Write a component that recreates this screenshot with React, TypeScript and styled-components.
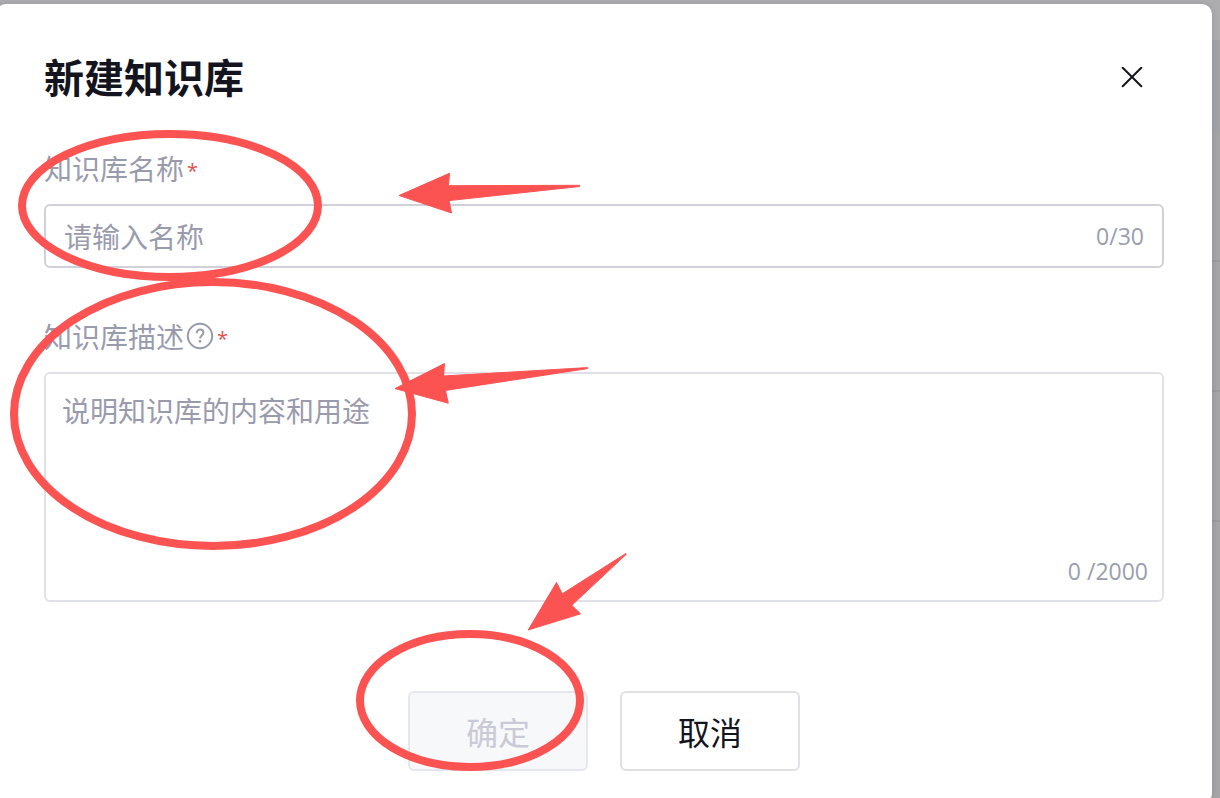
import React, { useState } from "react";
import styled, { createGlobalStyle } from "styled-components";

const GlobalStyle = createGlobalStyle`
  * { box-sizing: border-box; }
  body {
    margin: 0;
    background: #a9a9ac;
    font-family: "Open Sans", "Noto Sans CJK SC", sans-serif;
    color: #14141e;
  }
`;

const Backdrop = styled.div`
  position: relative;
  display: grid;
  grid-template-columns: minmax(0, 1fr) 8px;
  height: 100vh;
  overflow: hidden;
  background: #adadb0;
`;

const PageEdge = styled.div`
  padding-top: 40px;
  background: linear-gradient(#adadb0 40px, #a5a5a7 40px);
`;

const EdgeBand = styled.div`
  height: 92px;
  background: #a1a3a7;
`;

const EdgeRow = styled.div`
  height: 130px;
  border-bottom: 2px solid #9b9b9d;
`;

const Dialog = styled.form`
  z-index: 1;
  align-self: start;
  margin: 4px 0 0 -4px;
  padding: 44px 48px 32px;
  border-radius: 10px;
  background: #fff;
  box-shadow: 0 0 6px rgba(0, 0, 0, 0.12);
`;

const Header = styled.header`
  display: flex;
  align-items: flex-start;
  justify-content: space-between;
  margin-bottom: 40px;
`;

const Title = styled.h1`
  margin: 0;
  font-family: "Noto Sans CJK SC", sans-serif;
  font-size: 40px;
  line-height: 56px;
  font-weight: 700;
`;

const CloseButton = styled.button`
  display: flex;
  align-items: center;
  justify-content: center;
  width: 64px;
  height: 60px;
  padding: 0;
  border: 0;
  background: none;
  color: #14141e;
  cursor: pointer;
`;

const Field = styled.div`
  margin-bottom: 48px;
`;

const LabelRow = styled.div`
  display: flex;
  align-items: center;
  height: 40px;
  margin-bottom: 16px;
  color: #999bad;
`;

const Label = styled.label`
  font-family: "Noto Sans CJK SC", sans-serif;
  font-size: 28px;
  line-height: 40px;
`;

const HelpIcon = styled.svg`
  margin-left: 2px;
`;

const Required = styled.span`
  margin-left: 3px;
  padding-top: 6px;
  font-size: 20px;
  line-height: 32px;
  color: #e0524f;
`;

const InputBox = styled.div`
  display: flex;
  align-items: center;
  height: 64px;
  padding: 0 18px;
  border: 2px solid #d0d0d9;
  border-radius: 6px;
`;

const TextBox = styled.div`
  display: flex;
  flex-direction: column;
  align-items: flex-end;
  height: 230px;
  padding: 15px 14px 13px 16px;
  border: 2px solid #e0e0e7;
  border-radius: 6px;
`;

const entry = `
  flex: 1;
  min-width: 0;
  padding: 0;
  border: 0;
  outline: 0;
  background: none;
  font-family: "Noto Sans CJK SC", sans-serif;
  font-size: 28px;
  line-height: 42px;
  color: #14141e;
  &::placeholder { color: #999bad; opacity: 1; }
`;

const TextInput = styled.input`
  ${entry}
`;

const TextArea = styled.textarea`
  ${entry}
  width: 100%;
  resize: none;
`;

const Counter = styled.span`
  font-size: 23px;
  line-height: 32px;
  color: #999eaf;
`;

const Actions = styled.footer`
  display: flex;
  justify-content: center;
  gap: 32px;
  margin-top: 89px;
`;

const ActionButton = styled.button`
  width: 180px;
  height: 80px;
  padding: 0;
  border: 2px solid #e0e0e7;
  border-radius: 6px;
  background: #fff;
  font-family: "Noto Sans CJK SC", sans-serif;
  font-size: 32px;
  line-height: 48px;
  color: #14141e;
  cursor: pointer;
  &:disabled {
    border-color: #e6e6ed;
    background: #f7f8fa;
    color: #c9cad6;
    cursor: default;
  }
`;

const Markup = styled.svg`
  position: absolute;
  z-index: 2;
  top: 0;
  left: 0;
  pointer-events: none;
`;

export default function App() {
  const [name, setName] = useState("");
  const [description, setDescription] = useState("");

  return (
    <>
      <GlobalStyle />
      <Backdrop>
        <Dialog
          role="dialog"
          aria-labelledby="dialog-title"
          onSubmit={(e) => e.preventDefault()}
        >
          <Header>
            <Title id="dialog-title">新建知识库</Title>
            <CloseButton type="button" aria-label="关闭">
              <svg width="22" height="22" viewBox="0 0 22 22" fill="none" stroke="currentColor" strokeWidth="2" strokeLinecap="round">
                <path d="M1.7 0.7l18.6 18.6M20.3 0.7L1.7 19.3" />
              </svg>
            </CloseButton>
          </Header>

          <Field>
            <LabelRow>
              <Label htmlFor="kb-name">知识库名称</Label>
              <Required>*</Required>
            </LabelRow>
            <InputBox>
              <TextInput
                id="kb-name"
                placeholder="请输入名称"
                maxLength={30}
                value={name}
                onChange={(e) => setName(e.target.value)}
              />
              <Counter>{name.length}/30</Counter>
            </InputBox>
          </Field>

          <Field>
            <LabelRow>
              <Label htmlFor="kb-description">知识库描述</Label>
              <HelpIcon width="28" height="28" viewBox="0 0 28 28" fill="none" stroke="currentColor" strokeWidth="2">
                <circle cx="14" cy="14" r="12.2" />
                <path d="M10.7 11.2c0-2.2 1.3-3.6 3.4-3.6 2 0 3.3 1.2 3.3 3 0 1.3-.7 2.1-1.7 2.9-1.1.9-1.6 1.5-1.6 3" />
                <circle cx="14" cy="19.3" r="1.4" fill="currentColor" stroke="none" />
              </HelpIcon>
              <Required>*</Required>
            </LabelRow>
            <TextBox>
              <TextArea
                id="kb-description"
                placeholder="说明知识库的内容和用途"
                maxLength={2000}
                value={description}
                onChange={(e) => setDescription(e.target.value)}
              />
              <Counter>{description.length} /2000</Counter>
            </TextBox>
          </Field>

          <Actions>
            <ActionButton type="submit" disabled={!name || !description}>确定</ActionButton>
            <ActionButton type="button">取消</ActionButton>
          </Actions>
        </Dialog>

        <PageEdge>
          <EdgeBand />
          <EdgeRow />
          <EdgeRow />
          <EdgeRow />
        </PageEdge>

        <Markup width="640" height="790" viewBox="0 0 640 790" aria-hidden="true">
          <g fill="none" stroke="#fb5352" strokeWidth="8">
            <ellipse cx="170" cy="205.5" rx="148" ry="71.5" />
            <ellipse cx="213" cy="414" rx="199" ry="132" />
            <ellipse cx="470" cy="700.5" rx="110" ry="66.5" />
          </g>
          <g fill="#fb5352" stroke="#fb5352" strokeWidth="1" strokeLinejoin="round">
            <path d="M399 195.5L449.5 173.3L448.5 185.7L579.5 185.3V186.5L449 200.6L451.5 213Z" />
            <path d="M395 388.6L444.5 363.5L443.6 376L587.5 367.6V368.6L445.5 390.4L448.3 403.2Z" />
            <path d="M528.2 630L556.5 582.5L562.3 593.8L625.8 553.5L626.2 554.3L571.8 605.3L580.5 613.8Z" />
          </g>
        </Markup>
      </Backdrop>
    </>
  );
}
